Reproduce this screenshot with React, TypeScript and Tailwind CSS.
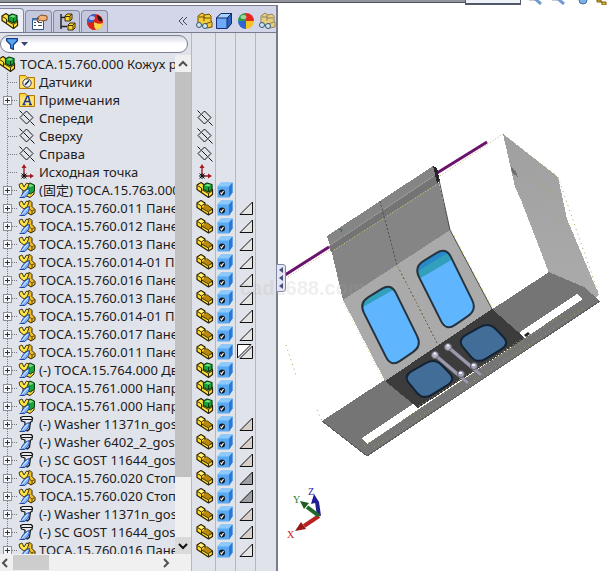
import React from "react";

type Kind = "folder" | "note" | "plane" | "origin" | "fixed" | "part" | "asm" | "bolt";
type Item = { label: string; kind: Kind; swatch?: string; split?: boolean };

const light = "#e4e4e4";
const warm = "#d8cfcb";
const grey = "#9c9fa3";

const items: Item[] = [
  { label: "Датчики", kind: "folder" },
  { label: "Примечания", kind: "note" },
  { label: "Спереди", kind: "plane" },
  { label: "Сверху", kind: "plane" },
  { label: "Справа", kind: "plane" },
  { label: "Исходная точка", kind: "origin" },
  { label: "(固定) TOCA.15.763.000", kind: "fixed" },
  { label: "TOCA.15.760.011 Панел", kind: "part", swatch: light },
  { label: "TOCA.15.760.012 Панел", kind: "part", swatch: light },
  { label: "TOCA.15.760.013 Панел", kind: "part", swatch: light },
  { label: "TOCA.15.760.014-01 Па", kind: "part", swatch: light },
  { label: "TOCA.15.760.016 Панел", kind: "part", swatch: light },
  { label: "TOCA.15.760.013 Панел", kind: "part", swatch: light },
  { label: "TOCA.15.760.014-01 Па", kind: "part", swatch: light },
  { label: "TOCA.15.760.017 Панел", kind: "part", swatch: light },
  { label: "TOCA.15.760.011 Панел", kind: "part", swatch: light, split: true },
  { label: "(-) TOCA.15.764.000 Дв", kind: "asm" },
  { label: "TOCA.15.761.000 Напра", kind: "asm" },
  { label: "TOCA.15.761.000 Напра", kind: "asm" },
  { label: "(-) Washer 11371n_gost", kind: "bolt", swatch: warm },
  { label: "(-) Washer 6402_2_gost", kind: "bolt", swatch: warm },
  { label: "(-) SC GOST 11644_gos", kind: "bolt", swatch: warm },
  { label: "TOCA.15.760.020 Стопо", kind: "part", swatch: grey },
  { label: "TOCA.15.760.020 Стопо", kind: "part", swatch: grey },
  { label: "(-) Washer 11371n_gost", kind: "bolt", swatch: warm },
  { label: "(-) SC GOST 11644_gos", kind: "bolt", swatch: warm },
  { label: "TOCA.15.760.016 Панел", kind: "part", swatch: light },
];

const Svg = ({ children, size = 18, label }: { children: React.ReactNode; size?: number; label?: string }) => (
  <svg width={size} height={size} viewBox="0 0 18 18" className="shrink-0" role={label ? "img" : undefined} aria-label={label} aria-hidden={label ? undefined : true}>
    {children}
  </svg>
);

const PartShape = () => (
  <g strokeLinejoin="round">
    <path d="M1 4 5 1.500 9 4v2.500l2-.5L16.500 10v3.500l-4 2.500L1 8.500Z" fill="#ffdc2e" stroke="#2d2100" strokeWidth="1.200" />
    <path d="M5.500 9 9 6.500l2-.5 5 4-3.500 2.500Z" fill="#b98a10" />
    <path d="m1.500 4.500 4 2.500v4M5.500 7 9 4.500M5.500 9l7 4v3m0-3.500 4-2.500" fill="none" stroke="#3b2b00" />
    <path d="m2.500 4 2.500-1.500L7.500 4.500 5.500 6Z" fill="#fff68e" />
  </g>
);

const AsmShape = () => (
  <g strokeLinejoin="round">
    <path d="M1 4 5 1.500 8.500 4l8 4.500v5l-4 3L1 8.500Z" fill="#ffe23c" stroke="#2d2100" strokeWidth="1.200" />
    <path d="m1.500 4.500 4 2.500v4.500M5.500 8.500l7 4V16m0-3.500 4-3" fill="none" stroke="#3b2b00" />
    <path d="M7.500 4 11 2l5 1.500v5L12.500 11 7.500 8.500Z" fill="#17a23a" stroke="#063d13" strokeWidth="1.200" />
    <path d="m8.500 4.500 3-1.500 3.500 1-2.500 1.500Z" fill="#7be07c" />
    <path d="M12.500 6v4.500" stroke="#063d13" />
  </g>
);

const Feather = () => (
  <g strokeLinejoin="round">
    <path d="M3 15.500C5 12 6 9 11.500 7.500c0 4-1.500 7-5 9Z" fill="#7fb2f8" stroke="#1c47a8" />
    <path d="m3.500 16 6.500-7" stroke="#e3f1ff" />
    <path d="M1.500 16.500h5" stroke="#1c47a8" />
  </g>
);

const Mates = () => (
  <path d="M1 3.500 4 2l2 4 2.500-4L11 3 9 8l-3 2-4-3Z" fill="#ffe544" stroke="#42360a" strokeWidth="1" />
);

const PlaneShape = () => (
  <path d="M8.500 2 15 8.500 8.500 15 2 8.500ZM1.500 1.500l3 3M5.500 5.500l6 6M12.500 12.500l4 4" fill="none" stroke="#17181c" strokeWidth="1" />
);

const OriginShape = () => (
  <g>
    <path d="M6 13V4M6 13h8" stroke="#a31b22" strokeWidth="1.400" />
    <path d="M6 1 3.500 5h5ZM16 13l-4-2.500v5Z" fill="#a31b22" />
    <path d="m3.500 10.500 5 5m0-5-5 5M6 10v6m-3-3h6" stroke="#111" />
  </g>
);

const FolderShape = ({ note }: { note?: boolean }) => (
  <g>
    <path d="M1.500 15.500v-13h6l1.500 2h7.500v11Z" fill="#ffd33f" stroke="#b07a04" />
    <path d="M2.500 5.500h13v9h-13Z" fill="#ffe27a" />
    {note ? (
      <path d="m5.500 13.500 3.500-8 1.500 0 2 8m-5.500-3h5M4.500 13.500h3m3.500 0h3" fill="none" stroke="#1b3c92" strokeWidth="1.500" />
    ) : (
      <g>
        <circle cx="9" cy="10" r="4.200" fill="#f4f7fa" stroke="#333d54" />
        <path d="m7 12 4-4.500" stroke="#17233b" strokeWidth="1.500" />
      </g>
    )}
  </g>
);

const BoltShape = () => (
  <g strokeLinejoin="round">
    <path d="M2.500 2.500 5 1.500h8l1.500 1.500-.5 3.500-1.500.5-1 7-2 2-3-1 .5-8L3.500 6Z" fill="#e6e9ed" stroke="#111" strokeWidth="1.200" />
    <path d="M3.500 4.500h10.500" stroke="#111" />
    <Feather />
  </g>
);

function TreeIcon({ kind }: { kind: Kind }) {
  if (kind === "folder") return <Svg><FolderShape /></Svg>;
  if (kind === "note") return <Svg><FolderShape note /></Svg>;
  if (kind === "plane") return <Svg><PlaneShape /></Svg>;
  if (kind === "origin") return <Svg><OriginShape /></Svg>;
  if (kind === "bolt") return <Svg><BoltShape /></Svg>;
  return (
    <Svg>
      {kind === "part" ? (
        <g strokeLinejoin="round">
          <path d="m8 3 4-1.500 2 2v4l3 3v3l-4 2.500-6-4Z" fill="#eebf2a" stroke="#2d2100" />
          <path d="m10 9 4 3v3M14 12l2.500-1.500" fill="none" stroke="#6b4c04" />
        </g>
      ) : (
        <g strokeLinejoin="round">
          <path d="m5 8 11-1v6l-4 3.500-7-3Z" fill="#ffe03a" stroke="#2d2100" />
          <path d="m8 4 4-2 4.500 2v6L12.500 13 8 11Z" fill="#1ba23d" stroke="#063d13" />
          <path d="m9 4.500 3-1.500L15.500 4.500 12.500 6Z" fill="#83dd85" />
        </g>
      )}
      <Mates />
      <Feather />
    </Svg>
  );
}

const CubeCheck = () => (
  <Svg label="Отображение">
    <path d="M1.500 5.500 5 1.500h11.500v10L13 16.500H1.500Z" fill="#5aa9f3" />
    <path d="M1.500 5.500 5 1.500h11.500L13 5.500Z" fill="#8ccafc" />
    <path d="m13 5.500 3.500-4v10l-3.500 5Z" fill="#2b79d4" />
    <circle cx="6" cy="11.500" r="3" fill="#101820" />
    <path d="m4.500 11.500 1 1.500 2-3" fill="none" stroke="#fff" strokeWidth="1.200" />
  </Svg>
);

const Sphere = () => (
  <Svg>
    <path d="M9 9V1a8 8 0 0 0-8 8Z" fill="#2a9b3f" />
    <path d="M9 9V1a8 8 0 0 1 8 8Z" fill="#e1291f" />
    <path d="M9 9H1a8 8 0 0 0 8 8Z" fill="#2d66d2" />
    <path d="M9 9h8a8 8 0 0 1-8 8Z" fill="#f4c522" />
    <ellipse cx="6.500" cy="5" rx="3" ry="2" fill="#fff" opacity=".55" />
  </Svg>
);

const TabSphere = () => (
  <Svg>
    <circle cx="9" cy="9" r="8" fill="#d9241e" />
    <path d="M10 1a8 8 0 0 0-9 8c2 1 5 1 7 0 0-3 0-6 2-8Z" fill="#2f62cf" />
    <path d="M1 9a8 8 0 0 0 9 8c-2-2-2-5-2-8-2 1-5 1-7 0Z" fill="#d9241e" />
    <path d="M8 9c0 3 0 6 2 8a8 8 0 0 0 7-7c-3 1-6 1-9-1Z" fill="#f7d84a" />
    <path d="M11 2c3 1 5 3 5.500 6-2 1-5 0-5.500-6Z" fill="#2a1712" />
    <ellipse cx="6" cy="5" rx="3" ry="2" fill="#fff" opacity=".6" />
  </Svg>
);

const Glasses = ({ pale }: { pale?: boolean }) => (
  <Svg>
    <g opacity={pale ? 0.6 : 1}>
      <path d="m3 4 4-3 3 2 4-1 2 2v5l1 1v5l-5 1-9-5Z" fill="#f5cb36" stroke="#6a4d06" />
      <path d="M4 5h5v4m0-6v3h6M10 12l6-2" fill="none" stroke="#6a4d06" />
    </g>
    <circle cx="4" cy="13" r="2.500" fill="#cfe5f5" stroke="#36566d" />
    <circle cx="10" cy="14" r="2.500" fill="#cfe5f5" stroke="#36566d" />
  </Svg>
);

const Chevron = ({ d, bold }: { d: string; bold?: boolean }) => (
  <svg width="10" height="10" viewBox="0 0 10 10" aria-hidden="true">
    <path d={d} fill="none" stroke={bold ? "#111" : "#505050"} strokeWidth="2" />
  </svg>
);

function Tabs() {
  const base = "flex h-[22px] items-center justify-center rounded-t-[4px] border border-b-0 border-[#8589a0]";
  return (
    <div className="flex h-[27px] items-end border-b border-[#777b91] bg-[#d3d6e9]">
      <div role="tablist" className="flex items-end">
        <button role="tab" aria-selected="true" aria-label="Дерево" className="flex h-6 w-6 items-center rounded-tr-[4px] border-t border-r border-[#8589a0] bg-[#eceef6] pl-px">
          <Svg><AsmShape /></Svg>
        </button>
        <button role="tab" aria-label="Свойства" className={`${base} ml-px w-[27px] bg-[#c4c8dc]`}>
          <Svg>
            <path d="M2.500 5.500h11v11h-11Z" fill="#fff" stroke="#32567d" />
            <path d="M2.500 5.500h6v2h-6Z" fill="#457bb5" />
            <path d="M4 9.500h2M4 12.500h2m2-3h4m-4 3h4" stroke="#384f6c" />
            <path d="m7 5 4-3 6 1v4l-5 1-2-1-2 2-1-1 2-3Z" fill="#f0b37a" stroke="#854d25" />
          </Svg>
        </button>
        <button role="tab" aria-label="Конфигурации" className={`${base} ml-px w-[27px] bg-[#c4c8dc]`}>
          <Svg>
            <path d="M3 1v15M3 4.500h5M3 13.500h6" stroke="#222" strokeWidth="1.500" />
            <path d="m7 3 2-2h5v5l-2 2H7Zm3 9 2-2h5v5l-2 2h-5Z" fill="#f7d32b" stroke="#3e3100" />
            <path d="M7 3.500h5V8m-2 4.500h5V17m-3-14 2-2m1 11 2-2" fill="none" stroke="#3e3100" />
          </Svg>
        </button>
        <button role="tab" aria-label="Внешний вид" className={`${base} ml-px w-[27px] bg-[#c4c8dc]`}>
          <TabSphere />
        </button>
      </div>
      <button aria-label="Свернуть" className="mr-[2px] ml-auto flex h-[22px] w-3 items-center justify-center">
        <svg width="10" height="10" viewBox="0 0 10 10"><path d="M5 1 1 5l4 4M9 1 5 5l4 4" fill="none" stroke="#42485a" /></svg>
      </button>
    </div>
  );
}

function Tree() {
  return (
    <div className="flex min-h-0 flex-1">
      <ul role="tree" className="min-w-0 flex-1 overflow-hidden text-[13px] leading-[18px] text-[#1c1c20]">
        <li role="treeitem" className="flex h-[18px] items-center whitespace-nowrap">
          <span className="-ml-[2px] mr-1 flex"><Svg><AsmShape /></Svg></span>
          TOCA.15.760.000 Кожух ра
        </li>
        {items.map((it, i) => {
          const plus = i === 1 || i > 5;
          return (
            <li key={i} role="treeitem" className="flex h-[18px] items-center whitespace-nowrap">
              <svg width="18" height="18" className="shrink-0" aria-hidden="true">
                <path d="M7.500 0v18M8 9.500h10" stroke="#777b85" strokeDasharray="1 1" />
                {plus && (
                  <g>
                    <rect x="3.500" y="5.500" width="8" height="8" fill="#f6f7fa" stroke="#8b8f9b" />
                    <path d="M5 9.500h5M7.500 7v5" stroke="#333" />
                  </g>
                )}
              </svg>
              <span className="mr-[3px] flex"><TreeIcon kind={it.kind} /></span>
              {it.label}
            </li>
          );
        })}
      </ul>
      <div className="flex w-4 flex-col bg-[#f0f0f0]">
        <button aria-label="Вверх" className="flex h-[17px] items-center justify-center"><Chevron d="M1 7l4-4 4 4" /></button>
        <div className="h-[405px] bg-[#c1c1c1]" />
        <button aria-label="Вниз" className="mt-auto flex h-[17px] items-center justify-center bg-[#dadada]"><Chevron d="M1 3l4 4 4-4" bold /></button>
      </div>
    </div>
  );
}

function DisplayPane() {
  const col = "border-l border-[#b4b7c2]";
  return (
    <div className="flex w-[85px] shrink-0 flex-col">
      <div className="grid h-[27px] grid-cols-[24px_20px_20px_21px] items-center overflow-hidden border-b border-[#777b91] bg-[#d3d6e9] pt-[4px]">
        <span className="flex pl-1"><Glasses /></span>
        <Svg>
          <path d="M1.500 6 6 1.500h10.500v10L12 16.500H1.500Z" fill="#6faafa" stroke="#142f6b" />
          <path d="M1.500 6 6 1.500h10.500L12 6Z" fill="#a9d1ff" stroke="#142f6b" />
          <path d="m12 6 4.500-4.500v10L12 16.500Z" fill="#2b64bd" stroke="#142f6b" />
        </Svg>
        <span className="flex pl-[2px]"><Sphere /></span>
        <span className="flex pl-[3px]"><Glasses pale /></span>
      </div>
      <div className="grid flex-1 grid-cols-[24px_20px_20px_21px]">
        <div className={`${col} pt-[76px] pl-1`}>
          {items.slice(2).map((it, i) => (
            <div key={i} className="h-[18px]">
              {it.kind === "plane" || it.kind === "origin" ? (
                <TreeIcon kind={it.kind} />
              ) : (
                <Svg>{it.kind === "asm" || it.kind === "fixed" ? <AsmShape /> : <PartShape />}</Svg>
              )}
            </div>
          ))}
        </div>
        <div className={`${col} pt-[148px]`}>
          {items.slice(6).map((_, i) => (
            <div key={i} className="h-[18px]"><CubeCheck /></div>
          ))}
        </div>
        <div className={`${col} pt-[148px]`}>
          {items.slice(6).map((it, i) => (
            <div key={i} className="h-[18px]">
              {it.swatch && (
                <Svg>
                  {it.split && <path d="M1.500 15V1.500H15Z" fill="#fff" stroke="#111" />}
                  <path d="M4 15.500 16.500 3v12.500Z" fill={it.swatch} stroke="#111" />
                </Svg>
              )}
            </div>
          ))}
        </div>
        <div className={col} />
      </div>
    </div>
  );
}

// Closed outline through the given corners, each one softened by radius r.
function rounded(pts: number[][], r: number) {
  const n = pts.length;
  return (
    pts
      .map((p, i) => {
        const toward = (q: number[]) => {
          const l = Math.hypot(q[0] - p[0], q[1] - p[1]);
          return `${p[0] + ((q[0] - p[0]) * r) / l} ${p[1] + ((q[1] - p[1]) * r) / l}`;
        };
        return `${i ? "L" : "M"}${toward(pts[(i + n - 1) % n])}Q${p[0]} ${p[1]} ${toward(pts[(i + 1) % n])}`;
      })
      .join("") + "Z"
  );
}

const tall = rounded([[359, 303], [391, 283], [422, 346], [391, 367]], 11);
const small = rounded([[403, 376], [435, 358], [456, 380], [423, 400]], 10);

function Model() {
  return (
    <svg width="330" height="566" viewBox="278 5 330 566" className="shrink-0" role="img" aria-label="Модель кожуха">
      <defs>
        <clipPath id="pane"><path d={tall} /></clipPath>
        <linearGradient id="wall" x2="0" y2="1"><stop stopColor="#a0a0a0" /><stop offset="1" stopColor="#ababab" /></linearGradient>
      </defs>
      <g shapeRendering="crispEdges">
        <path d="m503 134 55 43 9 42 32 76-14 9-36-31-28-73-6-13Z" fill="url(#wall)" />
        <path d="m511 167 5 5 2 5-6-4Z" fill="#707070" />
        <path d="m322 421 227-149 35 15 16 14-233 155Z" fill="#757575" />
        <path d="m362 438 215-144 6 5-216 145Z" fill="#fff" />
        <path d="m322 421 45 35 233-155" fill="none" stroke="#5d5d5d" />
      </g>
      <path d="m503 134 55 43M511 160l47 37M515 186l52 40M558 177l41 118M364 446l200-132M374 447l210-139M286 345l10 30M317 410l5 11" fill="none" stroke="#a7a34a" strokeDasharray="1 4" />
      <path d="m285 275 44-28M437 173l50-31" stroke="#6b146e" strokeWidth="3" />
      <path d="m288 277 42-27M440 176l63-42" stroke="#c5aa79" strokeDasharray="1 2" />
      <g shapeRendering="crispEdges">
        <path d="m327 236 106-70 6 18 11 46-107 70-12-51Z" fill="#858585" />
        <path d="m329 246 107-71 3 7-108 70Z" fill="#747474" />
        <path d="m343 300 107-70 42 79-107 72Z" fill="#aaa" />
        <path d="m433 166 4 2 3 13-3 2Z" fill="#252525" />
        <path d="m385 381 107-72 33 29-107 70Z" fill="#3c3c3c" />
      </g>
      <path d="m329 246 105-70" stroke="#bbb" strokeDasharray="1 1" />
      <path d="m334 250 102-65" fill="none" stroke="#d9d563" strokeDasharray="1 2" />
      <path d="m439 180 11 50 42 79" fill="none" stroke="#484848" />
      <path d="m451 230 42 79" fill="none" stroke="#d9d563" strokeDasharray="2 4" />
      <path d="m380 201 17 64 40 78" fill="none" stroke="#4d4d4d" strokeDasharray="2 2" />
      <path d="m398 267 38 76M343 302l41 79" stroke="#d9d574" strokeDasharray="1 4" />
      <path d="m339 229 3 1-1 2" fill="none" stroke="#247043" />
      {[0, 1].map((k) => (
        <g key={k} transform={k ? "translate(55 -36)" : undefined}>
          <g clipPath="url(#pane)">
            <path d="M355 270h75v110h-75Z" fill="#5fb6ff" />
            <path d={k ? "m355 311 0-15 35-18 8 17-34 20Z" : "m355 309 0-10 35-18 3 9-30 17Z"} fill="#329fbb" />
            <path d={k ? "m355 302 0-5 35-18 4 9-31 19Z" : "m355 303 0-6 35-18 2 6-30 16Z"} fill="#2888c8" />
          </g>
          <path d={tall} fill="none" stroke="#26333e" strokeWidth="2" />
        </g>
      ))}
      <path d={small} fill="#426d98" stroke="#142334" strokeWidth="2" />
      <path d={small} transform="translate(54 -36)" fill="#426d98" stroke="#142334" strokeWidth="2" />
      <path d="m419 406 106-69" stroke="#aaa661" strokeDasharray="1 3" />
      {[[435, 355], [448, 347]].map(([x, y]) => (
        <g key={x} transform={`translate(${x} ${y})`}>
          <path d="m0 0 33 28" stroke="#5a5a68" strokeWidth="4" />
          <path d="m0 0 33 28" stroke="#9a9aac" strokeWidth="3" />
          <circle r="3.500" fill="#b4b4c6" stroke="#666674" />
          <circle cx="26" cy="19" r="3.500" fill="#a4a4b8" stroke="#555563" />
          <path d="m-1-2 2 1m23 19 3 0" stroke="#f0f0f8" strokeWidth="2" />
        </g>
      ))}
      <path d="m524 335 4-3 2 2-4 3Z" fill="#222" />
      <g strokeWidth="4">
        <path d="m319 516-15 10" stroke="#b82222" />
        <path d="m295 531 6-9 5 7Z" fill="#981717" />
        <path d="m319 516-2-14" stroke="#20208a" />
        <path d="m314 494 5 8-8 2Z" fill="#1c1c96" />
        <path d="m319 516-12-9" stroke="#23682a" />
        <path d="m300 501 9 2-5 6Z" fill="#1c5c22" />
      </g>
      <g fontSize="10" className="font-['Liberation_Serif',serif]">
        <text x="287" y="538" fill="#c22020">X</text>
        <text x="293" y="503" fill="#238132">Y</text>
        <text x="308" y="495" fill="#2424ae">Z</text>
      </g>
    </svg>
  );
}

export default function App() {
  return (
    <div className="flex h-screen flex-col overflow-hidden bg-white font-['Noto_Sans','Noto_Sans_CJK_SC',sans-serif]">
      <header className="flex h-[5px] shrink-0 items-start">
        <div className="h-[3px] w-[465px] border-b border-[#4d515c] bg-[#92959c]" />
        <div className="h-[5px] w-14 border-x border-b-2 border-[#52586a] bg-[#eef1f8]" />
        <svg width="87" height="5" viewBox="0 0 87 5" aria-hidden="true">
          <path d="m13-2 7 6M36-2l7 6" stroke="#6f9bd0" strokeWidth="3" />
          <path d="M8 0h6M31 0h6" stroke="#999" />
          <circle cx="62" cy="0" r="4" fill="#79b2ea" stroke="#456e9c" />
          <path d="M76 0h4v2h5v3h-4V2h-5Z" fill="#e1b92f" stroke="#795f15" />
        </svg>
      </header>
      <div className="relative flex min-h-0 flex-1">
        <aside className="flex w-[278px] shrink-0 border-t border-r-2 border-[#777b8b] bg-[#e1e3eb]">
          <div className="flex min-w-0 flex-1 flex-col">
            <Tabs />
            <div className="flex h-[22px] items-start pt-[2px] pr-[3px]">
              <label className="flex h-[18px] w-full items-center rounded-full border border-[#7c8095] bg-gradient-to-b from-[#d8dae5] to-white to-50% pl-[5px]">
                <Svg size={12}>
                  <path d="M1 1h16v3l-6 6v7l-4-2v-5L1 4Z" fill="#5ba8ee" stroke="#143f91" strokeWidth="2" />
                </Svg>
                <svg width="7" height="5" className="ml-[3px] shrink-0" aria-hidden="true"><path d="M0 0h7L3.500 4Z" fill="#3c4270" /></svg>
                <input aria-label="Фильтр" className="ml-1 w-full min-w-0 bg-transparent text-xs outline-none" />
              </label>
            </div>
            <Tree />
            <div className="flex h-[17px] shrink-0 items-center bg-[#f0f0f0]">
              <button aria-label="Влево" className="flex w-[13px] justify-start"><Chevron d="M7 1 3 5l4 4" /></button>
              <div className="h-[15px] w-9 bg-[#cdcdcd]" />
              <button aria-label="Вправо" className="mr-5 ml-auto"><Chevron d="m3 1 4 4-4 4" /></button>
            </div>
          </div>
          <DisplayPane />
        </aside>
        <main className="min-w-0 flex-1 overflow-hidden"><Model /></main>
        <span className="pointer-events-none absolute top-[269px] left-[240px] font-['Liberation_Sans',sans-serif] text-xl font-bold text-[#aaa]/20">cad2688.com</span>
        <button aria-label="Скрыть панель" className="absolute top-[259px] left-[276px] flex h-7 w-[10px] flex-col items-center justify-around rounded-r-[3px] border border-[#8287a5] bg-[#e5e7f4] py-px">
          {[0, 1, 2].map((n) => (
            <svg key={n} width="4" height="6" aria-hidden="true"><path d="M4 0v6L0 3Z" fill="#454e79" /></svg>
          ))}
        </button>
      </div>
    </div>
  );
}
